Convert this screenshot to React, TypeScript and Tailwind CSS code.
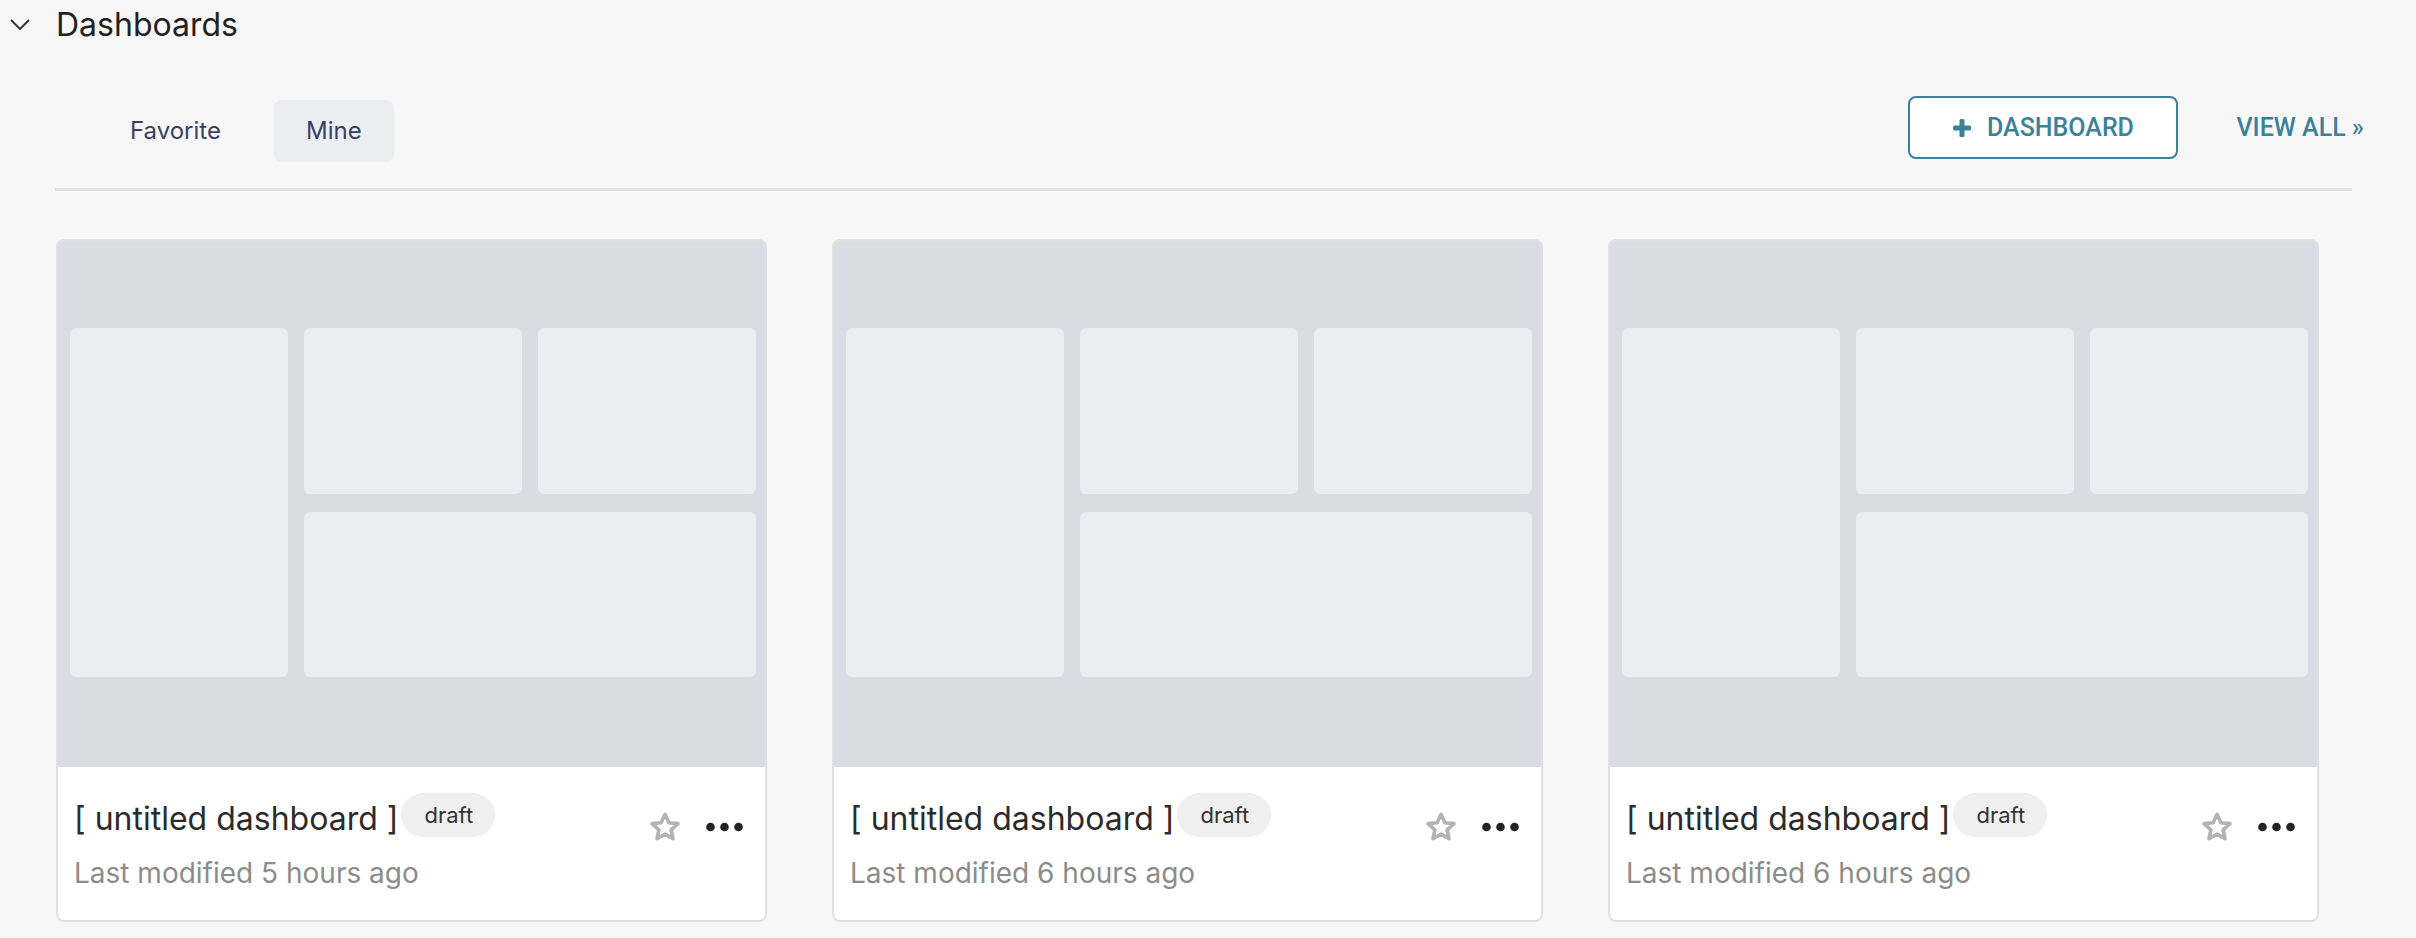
import React from "react"

type Card = { title: string; modified: string }

const CARDS: Card[] = [
  { title: "[ untitled dashboard ]", modified: "Last modified 5 hours ago" },
  { title: "[ untitled dashboard ]", modified: "Last modified 6 hours ago" },
  { title: "[ untitled dashboard ]", modified: "Last modified 6 hours ago" },
]

const ChevronDown = () => (
  <svg width="20" height="12" viewBox="0 0 20 12" fill="none">
    <polyline points="1.5,1.5 10,10 18.5,1.5" stroke="#333" strokeWidth="1.8" strokeLinecap="round" strokeLinejoin="round" />
  </svg>
)

const StarOutline = () => (
  <svg width="34" height="32" viewBox="0 0 24 23" fill="none">
    <path
      d="M12 2.4l2.8 6 6.5.7-4.9 4.4 1.4 6.4L12 16.6l-5.8 3.3 1.4-6.4-4.9-4.4 6.5-.7z"
      stroke="#b3b3b3"
      strokeWidth="2.6"
      strokeLinejoin="round"
    />
  </svg>
)

const Dots = () => (
  <svg width="38" height="10" viewBox="0 0 38 10">
    <circle cx="4.5" cy="5" r="4.3" fill="#222" />
    <circle cx="18.5" cy="5" r="4.3" fill="#222" />
    <circle cx="32.5" cy="5" r="4.3" fill="#222" />
  </svg>
)

function Preview() {
  return (
    <div className="h-[526px] bg-[#d9dce3] pt-[87px] pl-[12px] pr-[9px]">
      <div className="grid grid-cols-3 grid-rows-[166px_165px] gap-x-[16px] gap-y-[18px]">
        <div className="row-span-2 rounded-[6px] bg-[#ecedf1]" />
        <div className="rounded-[6px] bg-[#ecedf1]" />
        <div className="rounded-[6px] bg-[#ecedf1]" />
        <div className="col-span-2 rounded-[6px] bg-[#ecedf1]" />
      </div>
    </div>
  )
}

function DashboardCard({ card }: { card: Card }) {
  return (
    <div className="w-[711px] overflow-hidden rounded-[8px] border-2 border-[#e0e0e0] bg-white">
      <Preview />
      <div className="flex h-[153px] items-start justify-between pt-[26px] pl-[16px] pr-[21px]">
        <div className="flex flex-col">
          <div className="flex items-start">
            <span className="mt-[6px] text-[32px] leading-[40px] text-[#2b2b2b]">{card.title}</span>
            <span className="ml-[3px] flex h-[44px] items-center rounded-full bg-[#efefef] pl-[23px] pr-[22px] text-[22px] text-[#333]">
              draft
            </span>
          </div>
          <span className="mt-[16px] text-[28px] leading-[36px] text-[#8c8c8c]">{card.modified}</span>
        </div>
        <div className="mt-[18px] flex h-[32px] items-center gap-[24px]">
          <StarOutline />
          <Dots />
        </div>
      </div>
    </div>
  )
}

export default function App() {
  return (
    <div className="min-h-screen bg-[#f7f7f7] font-['Inter',sans-serif]">
      <div className="box-content flex h-[38px] items-center pt-[6px]">
        <div className="ml-[10px] flex items-center">
          <ChevronDown />
        </div>
        <h2 className="ml-[26px] text-[32px] leading-[38px] text-[#222]">Dashboards</h2>
      </div>

      <div className="pl-[55px] pr-[52px]">
        <div className="mt-[52px] flex items-start justify-between">
          <div className="mt-[4px] ml-[43px] flex items-center gap-[21px]">
            <button className="h-[62px] rounded-[8px] px-8 text-[24px] text-[#383f63]">Favorite</button>
            <button className="h-[62px] rounded-[8px] bg-[#ecedf1] px-8 text-[24px] text-[#383f63]">Mine</button>
          </div>
          <div className="flex items-center gap-[58px] font-['Roboto',sans-serif] font-medium text-[#3b8198]">
            <button className="flex h-[63px] w-[270px] items-center justify-center gap-[16px] rounded-[8px] border-2 border-[#3b8198] bg-white text-[25px]">
              <svg width="18" height="18" viewBox="0 0 18 18">
                <rect x="6.5" y="0" width="5" height="18" rx="1.5" fill="#3b8198" />
                <rect x="0" y="6.5" width="18" height="5" rx="1.5" fill="#3b8198" />
              </svg>
              DASHBOARD
            </button>
            <a className="text-[25px]">VIEW ALL »</a>
          </div>
        </div>

        <div className="mt-[26px] mr-[12px] h-[3px] bg-[#e0e0e0]" />

        <div className="mt-[48px] flex gap-[65px] pl-[1px]">
          {CARDS.map((c, i) => (
            <DashboardCard key={i} card={c} />
          ))}
        </div>
      </div>
    </div>
  )
}
